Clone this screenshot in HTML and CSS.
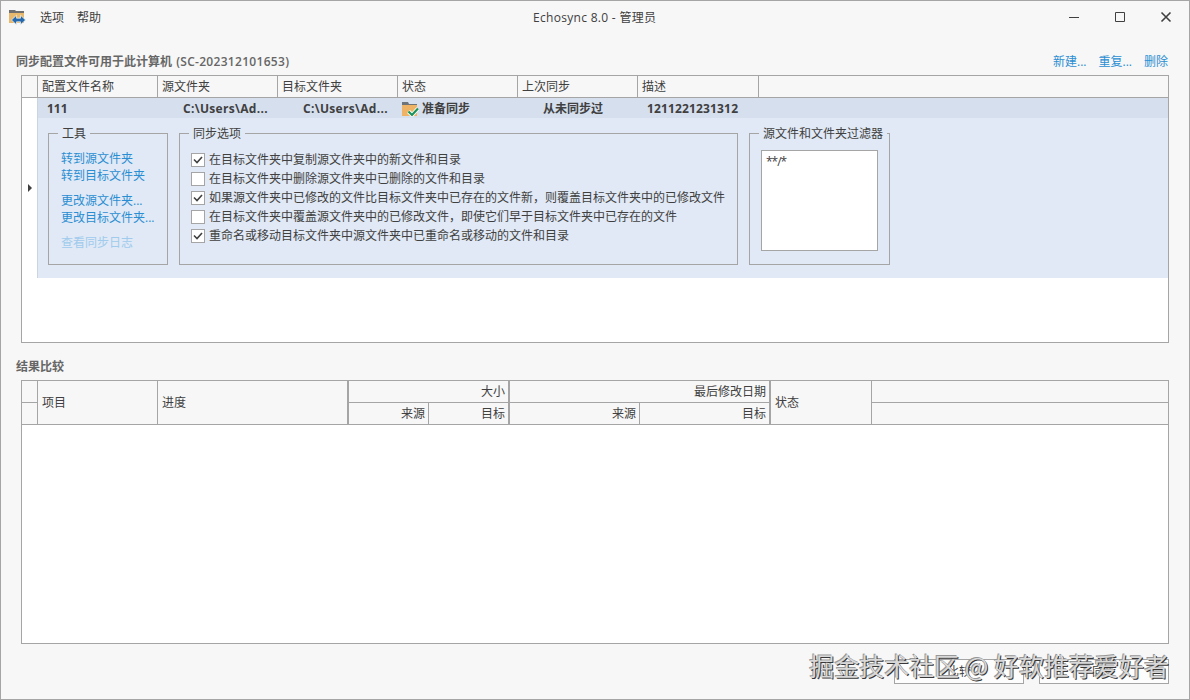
FILE: index.html
```html
<!DOCTYPE html>
<html lang="zh-CN">
<head>
<meta charset="UTF-8">
<title>Echosync 8.0 - 管理员</title>
<link rel="stylesheet" href="styles.css">
</head>
<body>
  <div class="window">
    <header class="titlebar">
      <svg class="app-icon" width="17" height="16" viewBox="0 0 17 16">
        <path d="M0 1h6l1 1h8v3H0z" fill="#6f6f6f"/>
        <path d="M0 4h15v10H0z" fill="#e8b96c"/>
        <path d="M2.500 11l5-4.800v3h4v-3l5 4.800-5 4.800v-3h-4v3z" fill="#2468ad" stroke="#f7f7f7" stroke-width=".7"/>
      </svg>
      <nav class="menu">
        <span>选项</span>
        <span>帮助</span>
      </nav>
      <div class="title">Echosync 8.0 - 管理员</div>
      <div class="controls">
        <svg width="12" height="12" viewBox="0 0 12 12"><path d="M1 6.500h10"/></svg>
        <svg width="12" height="12" viewBox="0 0 12 12"><path d="M1.500 1.500h9v9h-9z"/></svg>
        <svg class="close" width="12" height="12" viewBox="0 0 12 12"><path d="M1.500 1.500l9 9M10.500 1.500l-9 9"/></svg>
      </div>
    </header>

    <div class="section-head profiles-head">
      <h2>同步配置文件可用于此计算机 <span class="host">(SC-202312101653)</span></h2>
      <div class="actions">
        <a>新建...</a>
        <a>重复...</a>
        <a>删除</a>
      </div>
    </div>

    <div class="table profiles">
      <div class="profiles-cols">
        <div></div>
        <div>配置文件名称</div>
        <div>源文件夹</div>
        <div>目标文件夹</div>
        <div>状态</div>
        <div>上次同步</div>
        <div>描述</div>
        <div></div>
      </div>
      <div class="profile">
        <div class="marker"><i></i></div>
        <div class="profile-body">
          <div class="profile-row">
            <div class="name">111</div>
            <div class="path">C:\Users\Ad...</div>
            <div class="path">C:\Users\Ad...</div>
            <div class="state">
              <svg width="17" height="15" viewBox="0 0 17 15">
                <path d="M0 0h6l1 2h8v2H0z" fill="#6f7479"/>
                <path d="M0 3h15v11H0z" fill="#eeb364"/>
                <path d="M6.500 9.500l3.500 3.500 6-6.500" fill="none" stroke="#fff" stroke-width="4"/>
                <path d="M6.500 9.500l3.500 3.500 6-6.500" fill="none" stroke="#1c935b" stroke-width="2.200"/>
              </svg>
              <span>准备同步</span>
            </div>
            <div class="last">从未同步过</div>
            <div class="desc">1211221231312</div>
          </div>
          <div class="profile-detail">
            <fieldset class="tools">
              <legend>工具</legend>
              <a>转到源文件夹</a>
              <a>转到目标文件夹</a>
              <a class="gap">更改源文件夹...</a>
              <a>更改目标文件夹...</a>
              <a class="gap disabled">查看同步日志</a>
            </fieldset>
            <fieldset class="options">
              <legend>同步选项</legend>
              <div class="option"><span class="box"><svg viewBox="0 0 12 12"><path d="M2 5.500l3 3 5-5.500"/></svg></span>在目标文件夹中复制源文件夹中的新文件和目录</div>
              <div class="option"><span class="box"></span>在目标文件夹中删除源文件夹中已删除的文件和目录</div>
              <div class="option"><span class="box"><svg viewBox="0 0 12 12"><path d="M2 5.500l3 3 5-5.500"/></svg></span>如果源文件夹中已修改的文件比目标文件夹中已存在的文件新，则覆盖目标文件夹中的已修改文件</div>
              <div class="option"><span class="box"></span>在目标文件夹中覆盖源文件夹中的已修改文件，即使它们早于目标文件夹中已存在的文件</div>
              <div class="option"><span class="box"><svg viewBox="0 0 12 12"><path d="M2 5.500l3 3 5-5.500"/></svg></span>重命名或移动目标文件夹中源文件夹中已重命名或移动的文件和目录</div>
            </fieldset>
            <fieldset class="filter">
              <legend>源文件和文件夹过滤器</legend>
              <div class="filter-text">**/*</div>
            </fieldset>
          </div>
        </div>
      </div>
    </div>

    <div class="section-head results-head">
      <h2>结果比较</h2>
    </div>

    <div class="table results">
      <div class="results-cols">
        <div class="split"></div>
        <div class="tall">项目</div>
        <div class="tall thick">进度</div>
        <div class="pair size">
          <div class="group">大小</div>
          <div>来源</div>
          <div>目标</div>
        </div>
        <div class="pair modified">
          <div class="group">最后修改日期</div>
          <div>来源</div>
          <div>目标</div>
        </div>
        <div class="tall">状态</div>
        <div class="split"></div>
      </div>
    </div>

    <footer class="footer">
      <div class="button">比较</div>
      <div class="button">同步</div>
    </footer>
    <div class="watermark">掘金技术社区 @ 好软推荐爱好者</div>
  </div>
</body>
</html>
```
FILE: styles.css
```css
:root {
  --line: #a5a5a5;
  --text: #404040;
  --link: #2b8ed2;
  --bg: #f7f7f7;
}

* {
  box-sizing: border-box;
}

body {
  margin: 0;
  font-family: 'Open Sans', 'Noto Sans CJK SC', sans-serif;
  font-size: 12px;
  line-height: 17px;
  color: var(--text);
}

.window {
  position: relative;
  display: flex;
  flex-direction: column;
  width: 1190px;
  height: 700px;
  border: 1px solid var(--line);
  background: var(--bg);
  overflow: hidden;
  white-space: nowrap;
}

.titlebar {
  display: grid;
  grid-template-columns: 31px 493px auto 1fr;
  align-items: center;
  height: 32px;
  padding: 0 17px 0 8px;
}

.menu {
  display: flex;
  gap: 13px;
}

.title {
  letter-spacing: 0.3px;
}

.controls {
  display: flex;
  justify-content: flex-end;
  gap: 34px;
}

.controls svg {
  fill: none;
  stroke: #404040;
}

.controls .close {
  stroke-width: 1.6;
}

.section-head {
  display: flex;
  justify-content: space-between;
  padding: 0 21px 0 15px;
}

.section-head h2 {
  margin: 0;
  font-size: 12px;
  font-weight: 600;
  color: #666;
}

.section-head .host {
  margin-left: 1px;
  letter-spacing: 0.3px;
}

.profiles-head {
  margin-top: 20px;
}

.actions {
  display: flex;
  gap: 12px;
}

a {
  color: var(--link);
}

.table {
  margin: 0 20px;
  border: 1px solid var(--line);
  background: #fff;
}

.profiles {
  height: 268px;
  margin-top: 5px;
}

.profiles-cols {
  display: grid;
  grid-template-columns: 16px repeat(5, 120px) 121px 1fr;
  height: 22px;
  line-height: 21px;
  background: var(--bg);
  border-bottom: 1px solid var(--line);
}

.profiles-cols div {
  padding-left: 4px;
  border-right: 1px solid var(--line);
}

.profiles-cols div:last-child {
  border-right: 0;
}

.profile {
  display: grid;
  grid-template-columns: 15px 1fr;
  height: 180px;
}

.marker {
  display: flex;
  align-items: center;
  padding-left: 6px;
}

.marker i {
  border: 4px solid transparent;
  border-left: 4px solid #404040;
  border-right: 0;
}

.profile-body {
  border-left: 1px solid #cbd5e2;
  background: #e0e9f5;
}

.profile-row {
  display: grid;
  grid-template-columns: repeat(6, 120px);
  height: 20px;
  line-height: 22px;
  font-weight: 700;
  background: #d5dfee;
}

.profile-row .name {
  padding-left: 9px;
}

.profile-row .path {
  padding-left: 25px;
  letter-spacing: 0.3px;
}

.state {
  display: flex;
  align-items: center;
  gap: 3px;
  padding-left: 4px;
}

.last {
  padding-left: 25px;
}

.desc {
  padding-left: 9px;
  letter-spacing: 0.15px;
}

.profile-detail {
  display: flex;
  gap: 11px;
  padding: 8px 10px;
}

fieldset {
  height: 139px;
  margin: 0;
  padding: 0;
  border: 1px solid var(--line);
}

legend {
  height: 15px;
  margin-left: 9px;
  padding: 0 4px;
  line-height: 16px;
}

.tools {
  width: 120px;
}

.tools a {
  display: block;
  margin-left: 12px;
}

.tools legend + a {
  margin-top: 9px;
}

.tools .gap {
  margin-top: 8px;
}

.tools .disabled {
  color: #a0cbed;
}

.options {
  width: 559px;
}

.option {
  display: flex;
  align-items: center;
  gap: 4px;
  height: 19px;
  margin-left: 11px;
}

.options legend + .option {
  margin-top: 9px;
}

.box {
  width: 14px;
  height: 14px;
  border: 1px solid var(--line);
  background: #fff;
}

.box svg {
  display: block;
  fill: none;
  stroke: #404040;
  stroke-width: 1.6;
}

.filter {
  width: 141px;
}

.filter-text {
  width: 117px;
  height: 101px;
  margin: 9px 0 0 11px;
  padding: 2px 4px;
  border: 1px solid var(--line);
  background: #fff;
  letter-spacing: -1px;
}

.results-head {
  margin-top: 15px;
}

.results {
  height: 264px;
  margin-top: 5px;
}

.results-cols {
  display: grid;
  grid-template-columns: 16px 120px 191px 161px 261px 101px 1fr;
  height: 44px;
  line-height: 21px;
  background: var(--bg);
  border-bottom: 1px solid var(--line);
}

.results-cols > div {
  border-right: 1px solid var(--line);
}

.results-cols > div:last-child {
  border-right: 0;
}

.results-cols .tall {
  padding-left: 4px;
  line-height: 43px;
}

.results-cols .split {
  background: linear-gradient(var(--line), var(--line)) 0 21px / 100% 1px no-repeat;
}

.results-cols > .thick,
.results-cols > .pair {
  border-right-width: 2px;
}

.pair {
  display: grid;
  grid-template-rows: 22px 21px;
  text-align: right;
}

.pair div {
  padding-right: 3px;
}

.pair .group {
  grid-column: span 2;
  border-bottom: 1px solid var(--line);
}

.pair .group + div {
  border-right: 1px solid var(--line);
}

.size {
  grid-template-columns: 80px 1fr;
}

.modified {
  grid-template-columns: 130px 1fr;
}

.footer {
  display: flex;
  justify-content: flex-end;
  gap: 15px;
  margin-top: 15px;
  padding-right: 20px;
}

.button {
  width: 130px;
  height: 25px;
  border: 1px solid var(--line);
  background: #fdfdfd;
  line-height: 24px;
  text-align: center;
}

.watermark {
  position: absolute;
  right: 20px;
  bottom: 16px;
  font-family: 'Noto Sans CJK SC', sans-serif;
  font-size: 25px;
  line-height: 35px;
  color: #d8d8d8;
  text-shadow: 1px 1px 0 #383838, -1px -1px 0 #999;
}
```
